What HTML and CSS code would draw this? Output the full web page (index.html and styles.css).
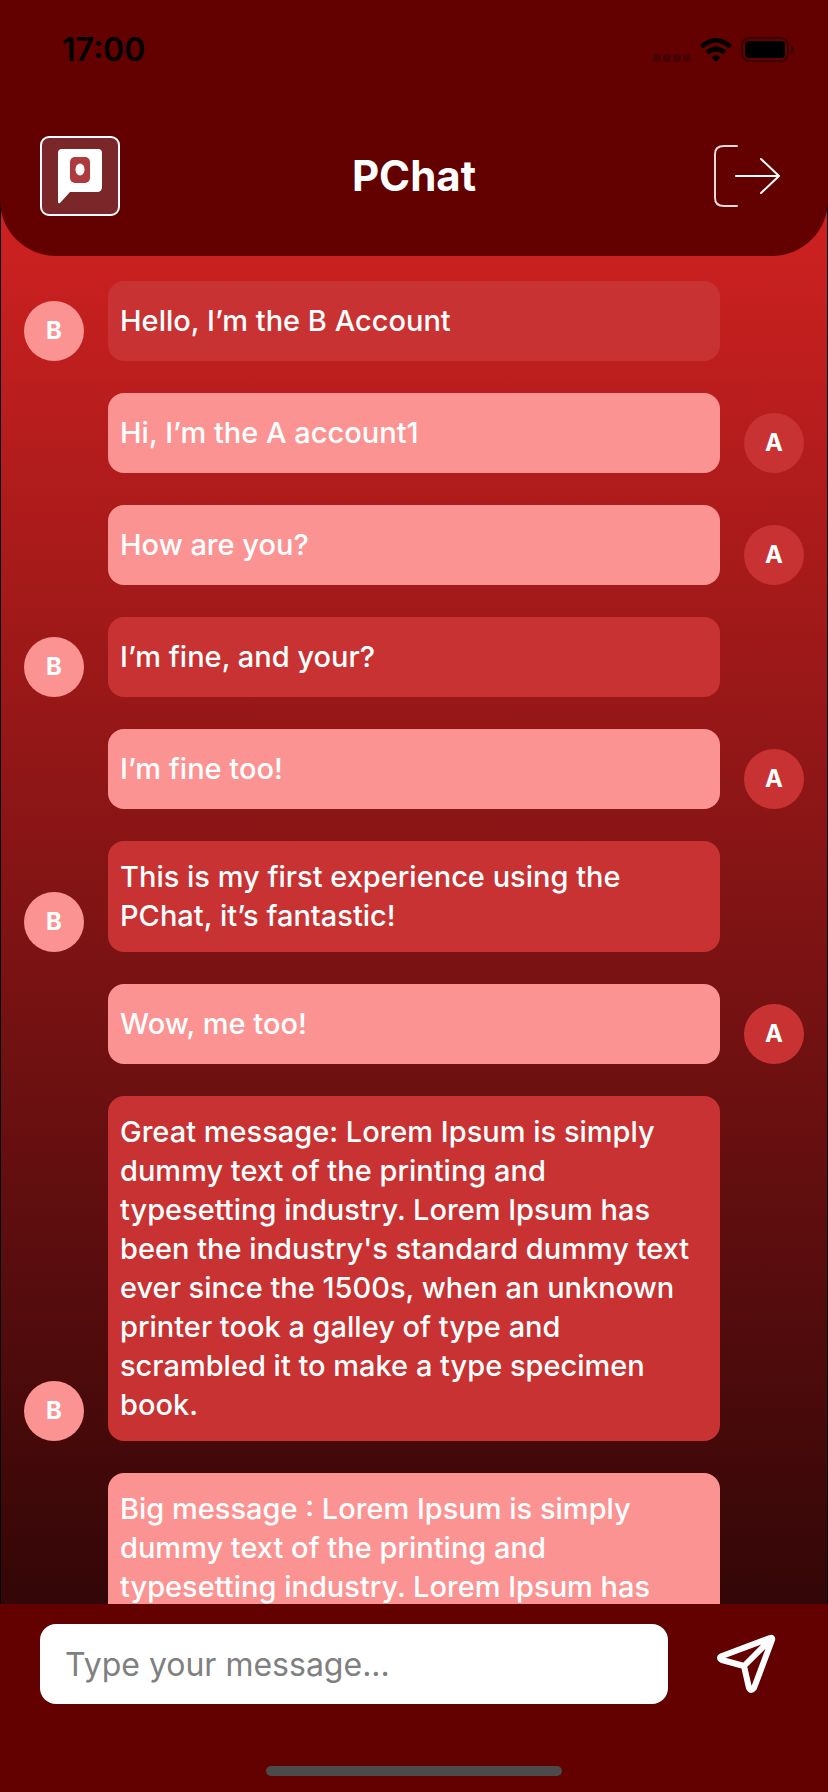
FILE: index.html
```
<!DOCTYPE html>
<html lang="en">
<head>
<meta charset="utf-8">
<meta name="viewport" content="width=device-width, initial-scale=1">
<title>PChat</title>
<link rel="stylesheet" href="styles.css">
</head>
<body>
<div class="app">
  <header class="header">
    <div class="status">
      <time class="clock">17:00</time>
      <div class="status-icons">
        <svg class="signal" viewBox="0 0 38 8" width="38" height="8" aria-hidden="true">
          <rect x="0" width="8" height="8" rx="3"/><rect x="10" width="8" height="8" rx="3"/><rect x="20" width="8" height="8" rx="3"/><rect x="30" width="8" height="8" rx="3"/>
        </svg>
        <svg class="wifi" viewBox="0 0 32 24" width="32" height="24" aria-hidden="true">
          <path d="M0 7Q16-7 32 7L29 10.500Q16-1 3 10.500Z"/>
          <path d="M5.500 13Q16 4 26.500 13L23 16.500Q16 10.500 9 16.500Z"/>
          <path d="M11.500 19Q16 15.500 20.500 19L16 24Z"/>
        </svg>
        <svg class="battery" viewBox="0 0 53 25" width="53" height="25" aria-hidden="true">
          <rect x="1" y="1" width="46" height="23" rx="7" fill="none" stroke="#000" stroke-opacity=".4" stroke-width="2"/>
          <rect x="4" y="4" width="40" height="17" rx="4"/>
          <path d="M50 8.500Q53 9.500 53 12.500T50 16.500Z" opacity=".45"/>
        </svg>
      </div>
    </div>
    <div class="titlebar">
      <svg class="logo" viewBox="0 0 80 80" role="img" aria-label="PChat logo">
        <rect x="1" y="1" width="78" height="78" rx="8" fill="#7b2729" stroke="#fff" stroke-width="2"/>
        <path d="M22 13H58Q62 13 62 17V51Q62 56 57 56H30L20 67Q18 68 18 66V17Q18 13 22 13Z" fill="#fff"/>
        <rect x="30" y="21" width="20" height="26" rx="5" fill="#ad3b3d"/>
        <ellipse cx="40" cy="33.500" rx="4.500" ry="6" fill="#fff"/>
      </svg>
      <h1 class="title">PChat</h1>
      <button class="icon-button" type="button" aria-label="Log out">
        <svg class="logout" viewBox="0 0 68 64" aria-hidden="true">
          <path d="M23 2H10Q1 2 1 10V54Q1 62 10 62H23" opacity=".85"/>
          <path d="M22 32H65M47 15L65 32L47 49"/>
        </svg>
      </button>
    </div>
  </header>
  <main class="messages">
    <article class="message"><span class="avatar">B</span><p class="bubble">Hello, I’m the B Account</p></article>
    <article class="message mine"><span class="avatar">A</span><p class="bubble">Hi, I’m the A account1</p></article>
    <article class="message mine"><span class="avatar">A</span><p class="bubble">How are you?</p></article>
    <article class="message"><span class="avatar">B</span><p class="bubble">I’m fine, and your?</p></article>
    <article class="message mine"><span class="avatar">A</span><p class="bubble">I’m fine too!</p></article>
    <article class="message"><span class="avatar">B</span><p class="bubble">This is my first experience using the<br>PChat, it’s fantastic!</p></article>
    <article class="message mine"><span class="avatar">A</span><p class="bubble">Wow, me too!</p></article>
    <article class="message"><span class="avatar">B</span><p class="bubble">Great message: Lorem Ipsum is simply<br>dummy text of the printing and<br>typesetting industry. Lorem Ipsum has<br>been the industry's standard dummy text<br>ever since the 1500s, when an unknown<br>printer took a galley of type and<br>scrambled it to make a type specimen<br>book.</p></article>
    <article class="message mine partial"><p class="bubble">Big message : Lorem Ipsum is simply<br>dummy text of the printing and<br>typesetting industry. Lorem Ipsum has</p></article>
  </main>
  <footer class="footer">
    <form class="composer">
      <input class="field" type="text" aria-label="Message" placeholder="Type your message...">
      <button class="icon-button" type="button" aria-label="Send">
        <svg class="send" viewBox="0 0 60 60" aria-hidden="true">
          <path d="M4 22L52 4Q55 3 54 6L36 54Q33 58 31 54L26 32L4 26Q0 24 4 22ZM26 32L53 5"/>
        </svg>
      </button>
    </form>
    <div class="home-bar"></div>
  </footer>
</div>
</body>
</html>
```
FILE: styles.css
```
* { box-sizing: border-box; }
body { margin: 0; background: #000; color: #fff; font-family: Inter, "Liberation Sans", sans-serif; }
.app {
  height: 100vh;
  display: flex;
  flex-direction: column;
}
.header {
  position: relative;
  flex: none;
  background: #630000;
  border-radius: 0 0 56px 56px;
}
.status {
  display: flex;
  justify-content: space-between;
  align-items: center;
  height: 98px;
  padding: 0 34px 0 62px;
}
.clock { color: #000; font-size: 32px; font-weight: 600; }
.status-icons { display: flex; align-items: flex-end; gap: 9px; }
.signal { opacity: .25; }
.titlebar {
  display: flex;
  justify-content: space-between;
  align-items: center;
  padding: 38px 40px 40px;
}
.logo { width: 80px; height: 80px; }
.title { margin: 0; font-size: 42px; line-height: 60px; font-weight: 700; }
.icon-button {
  display: flex;
  justify-content: center;
  align-items: center;
  width: 80px;
  height: 80px;
  padding: 0;
  border: 0;
  background: none;
}
.logout { width: 68px; height: 64px; fill: none; stroke: #fff; stroke-width: 2; stroke-linecap: round; stroke-linejoin: round; }
.messages {
  flex: 1;
  min-height: 0;
  margin-top: -56px;
  padding: 81px 23px 0;
  display: flex;
  flex-direction: column;
  gap: 32px;
  overflow-y: auto;
  scrollbar-width: none;
  border: solid #000;
  border-width: 0 1px;
  background: linear-gradient(#d02121, #330607);
}
.message { flex: none; display: flex; align-items: flex-end; gap: 24px; padding-right: 84px; }
.mine { flex-direction: row-reverse; padding: 0 0 0 84px; }
.partial { padding: 0 84px; }
.avatar {
  flex: none;
  width: 60px;
  height: 60px;
  border-radius: 50%;
  background: #fc9393;
  font-size: 24px;
  line-height: 60px;
  font-weight: 700;
  text-align: center;
}
.bubble {
  flex: 1;
  align-content: center;
  min-height: 80px;
  margin: 0;
  padding: 16px 0 17px 12px;
  border-radius: 16px;
  background: #c83232;
  font-size: 29px;
  line-height: 39px;
  font-weight: 500;
}
.mine .avatar { background: #c83232; }
.mine .bubble { background: #fc9393; }
.footer { flex: none; padding: 20px 40px 16px; background: #630000; }
.composer { display: flex; justify-content: space-between; gap: 40px; }
.field {
  flex: 1;
  min-width: 0;
  height: 80px;
  padding: 0 25px;
  border: 0;
  border-radius: 16px;
  background: #fff;
  color: #222;
  font: 400 32px Inter, sans-serif;
}
.field::placeholder { color: #808080; opacity: 1; }
.send { width: 60px; height: 60px; overflow: visible; fill: none; stroke: #fff; stroke-width: 6; stroke-linejoin: round; stroke-linecap: round; }
.home-bar { width: 296px; height: 10px; margin: 62px auto 0; border-radius: 5px; background: #4b4b4b; }
```
